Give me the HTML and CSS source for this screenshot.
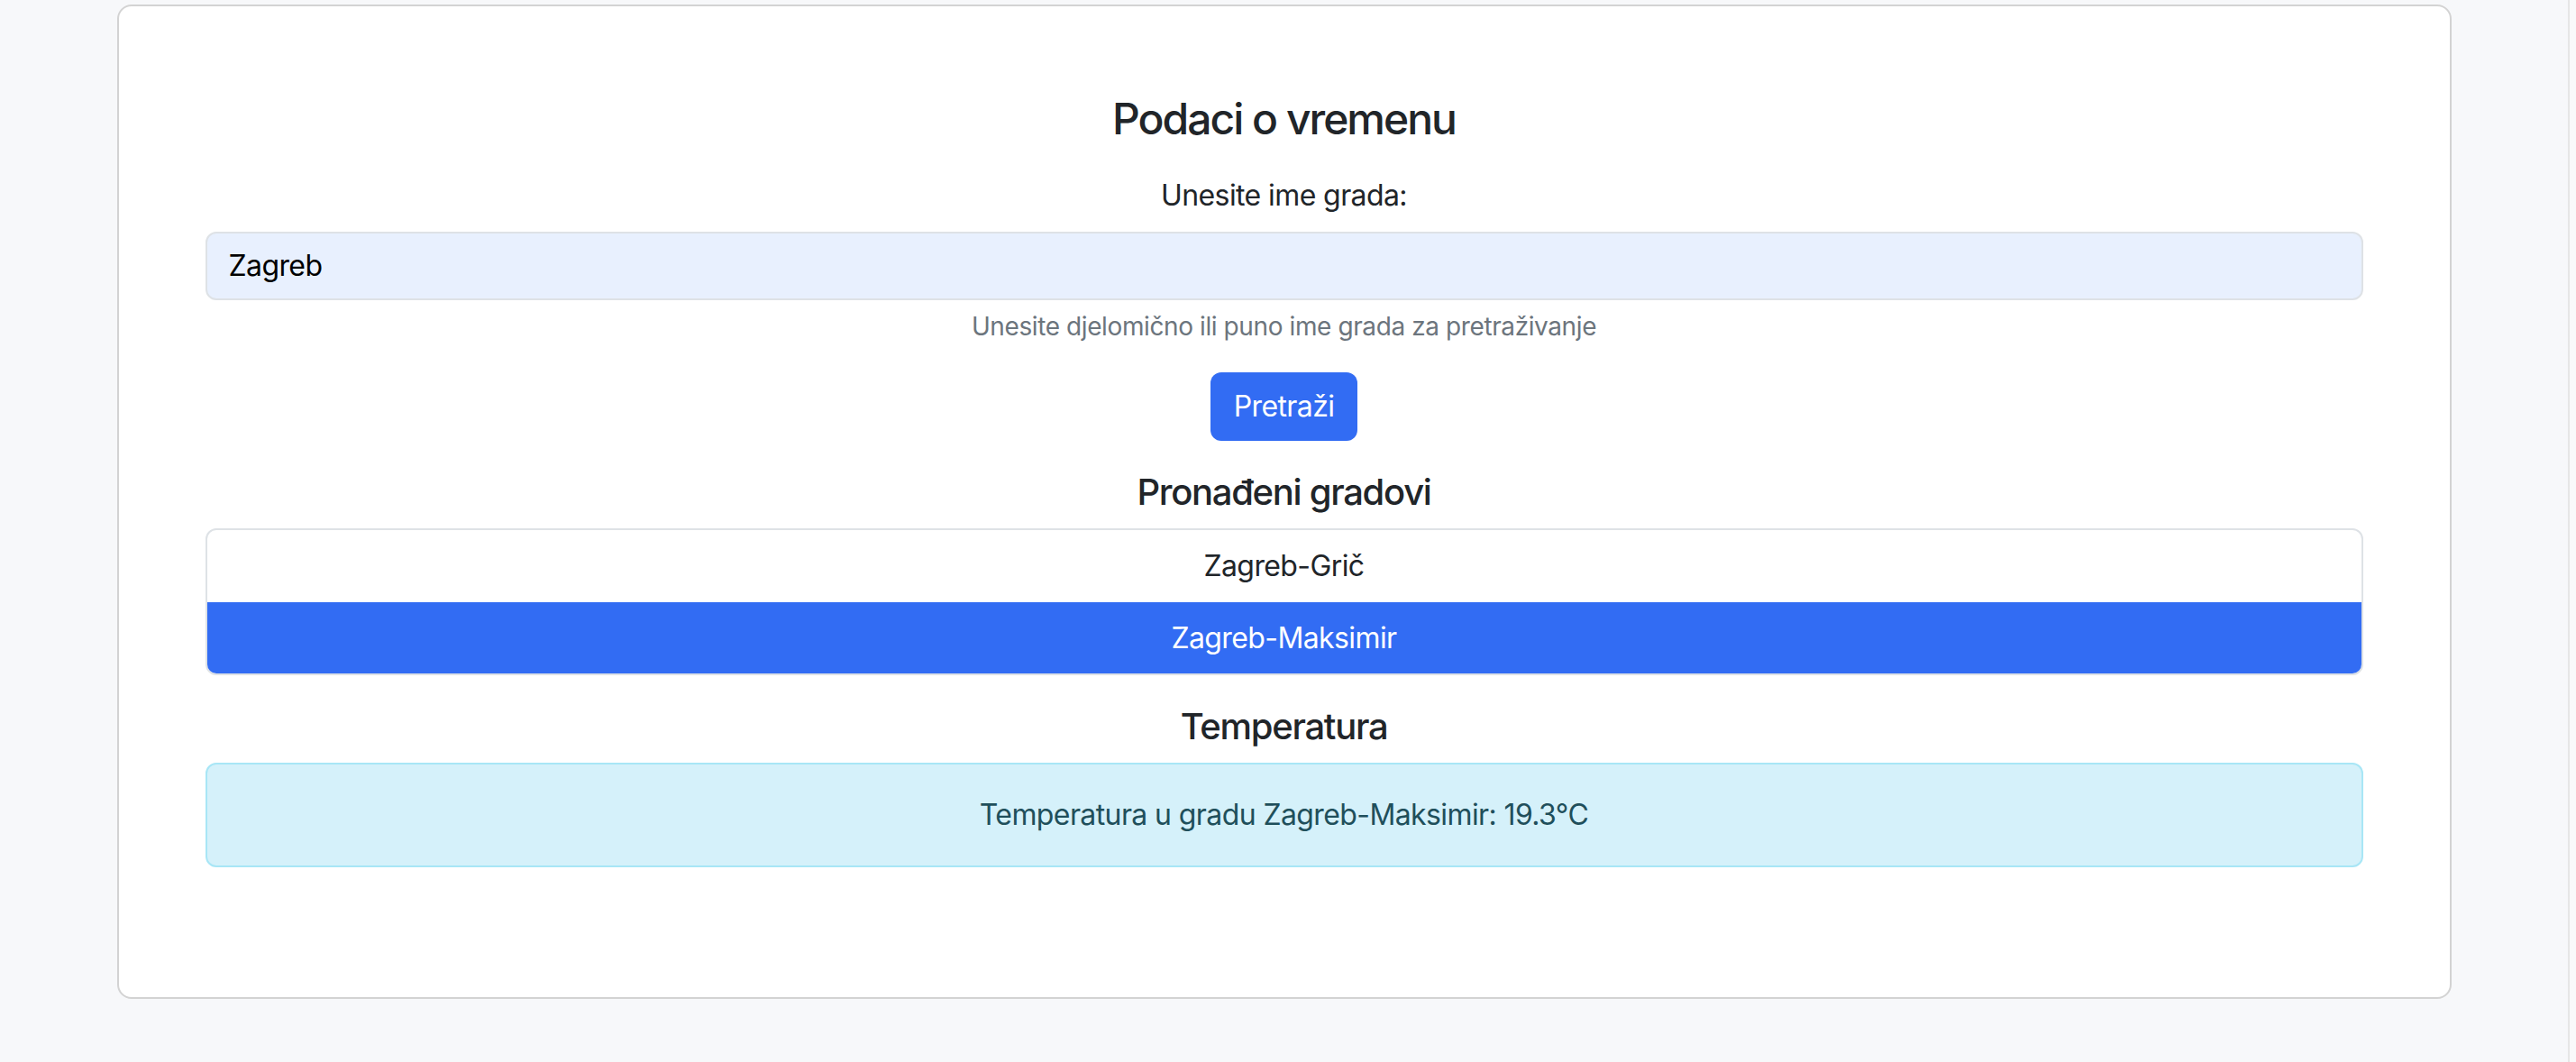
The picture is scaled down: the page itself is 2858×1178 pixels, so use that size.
FILE: index.html
```html
<!DOCTYPE html>
<html lang="hr">
<head>
<meta charset="utf-8">
<title>Podaci o vremenu</title>
<link rel="stylesheet" href="styles.css">
</head>
<body>
<div class="page">
  <div class="card">
    <h3 class="title">Podaci o vremenu</h3>
    <label class="label" for="grad">Unesite ime grada:</label>
    <input id="grad" class="input" type="text" value="Zagreb">
    <div class="help">Unesite djelomično ili puno ime grada za pretraživanje</div>
    <button class="btn" type="button">Pretraži</button>
    <h5 class="subtitle">Pronađeni gradovi</h5>
    <ul class="list">
      <li class="item">Zagreb-Grič</li>
      <li class="item active">Zagreb-Maksimir</li>
    </ul>
    <h5 class="subtitle">Temperatura</h5>
    <div class="alert">Temperatura u gradu Zagreb-Maksimir: 19.3°C</div>
  </div>
</div>
<div class="scrollbar"></div>
</body>
</html>
```

FILE: styles.css
```css
html, body {
  margin: 0;
  height: 100%;
}
body {
  background: #f7f8fa;
  font-family: Inter, "Noto Sans", "Liberation Sans", sans-serif;
  color: #212529;
  display: flex;
  letter-spacing: -0.6px;
}
.page {
  flex: 1;
  padding-top: 5px;
}
.scrollbar {
  width: 7px;
  border-left: 2px solid #e6e6e6;
  background: #f9f9fa;
}
.card {
  box-sizing: border-box;
  width: 2590px;
  margin: 0 auto;
  background: #fff;
  border: 2px solid #d3d3d3;
  border-radius: 16px;
  padding: 96px 96px 112px;
  text-align: center;
}
.title {
  font-size: 48px;
  font-weight: 500;
  line-height: 1.2;
  letter-spacing: -2px;
  margin: 0 0 32px;
}
.label {
  display: block;
  font-size: 32px;
  line-height: 48px;
  margin-bottom: 16px;
}
.input {
  display: block;
  box-sizing: border-box;
  width: 100%;
  height: 76px;
  padding: 0 24px;
  font-family: inherit;
  font-size: 32px;
  letter-spacing: -0.6px;
  color: #000;
  background: #e8f0fe;
  border: 2px solid #dee2e6;
  border-radius: 12px;
  outline: none;
}
.help {
  margin-top: 8px;
  font-size: 28px;
  line-height: 42px;
  letter-spacing: -0.4px;
  color: #6c757d;
}
.btn {
  margin-top: 30px;
  height: 76px;
  padding: 0 26px;
  font-family: inherit;
  font-size: 32px;
  letter-spacing: -0.6px;
  color: #fff;
  background: #326cf3;
  border: none;
  border-radius: 12px;
}
.subtitle {
  font-size: 40px;
  font-weight: 500;
  line-height: 48px;
  letter-spacing: -1.3px;
  margin: 33px 0 16px;
}
.list {
  list-style: none;
  margin: 0;
  padding: 0;
  border: 2px solid #dee2e6;
  border-radius: 12px;
  overflow: hidden;
}
.item {
  padding: 16px 32px;
  font-size: 32px;
  line-height: 48px;
}
.item.active {
  background: #326cf3;
  color: #fff;
  margin: 0 -2px -2px;
  padding-bottom: 17px;
}
.alert {
  padding: 32px;
  font-size: 32px;
  line-height: 48px;
  color: #1f4f5b;
  background: #d5f1fa;
  border: 2px solid #a8e6f6;
  border-radius: 12px;
  margin-bottom: 32px;
}
```
